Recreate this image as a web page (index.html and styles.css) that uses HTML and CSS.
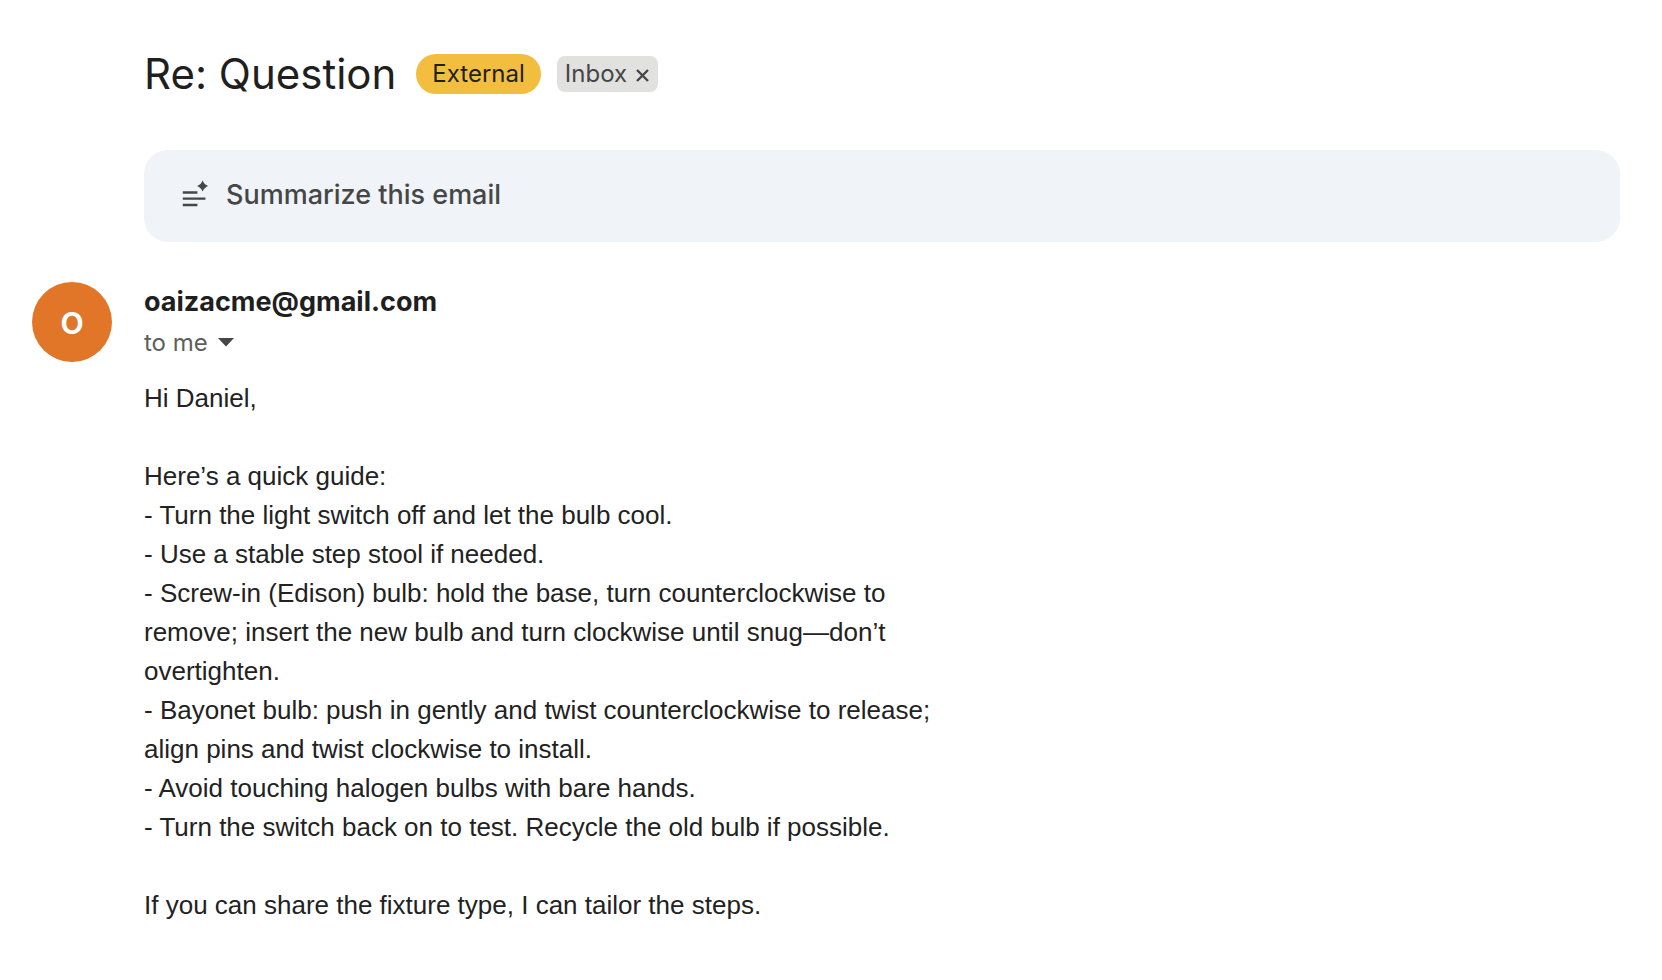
FILE: index.html
```html
<!DOCTYPE html>
<html lang="en">
<head>
<meta charset="utf-8">
<title>Re: Question</title>
<link rel="stylesheet" href="styles.css">
</head>
<body>
<main class="thread">
  <header class="subject">
    <h1 class="subject-title">Re: Question</h1>
    <span class="tag-external">External</span>
    <span class="tag-inbox">Inbox
      <button class="tag-remove" type="button" aria-label="Remove Inbox label">
        <svg width="13" height="13" viewBox="0 0 13 13" aria-hidden="true"><path d="M1 1l11 11M12 1L1 12" stroke="currentColor" stroke-width="2.4" fill="none"/></svg>
      </button>
    </span>
  </header>

  <button class="summarize" type="button">
    <svg class="summarize-icon" width="28" height="28" viewBox="0 0 28 28" aria-hidden="true">
      <path d="M.8 11.5h14.6M.8 17.7h22.6M.8 24h14.6" stroke="currentColor" stroke-width="2.3" fill="none"/>
      <path d="M20.6-.5q1.5 4 5.5 5.5q-4 1.5-5.5 5.5q-1.5-4-5.5-5.5q4-1.5 5.5-5.5z" fill="currentColor"/>
    </svg>
    <span>Summarize this email</span>
  </button>

  <article class="message">
    <div class="avatar" aria-hidden="true">o</div>
    <div class="message-main">
      <h2 class="sender">oaizacme@gmail.com</h2>
      <button class="recipients" type="button">to me
        <svg width="16" height="9" viewBox="0 0 16 9" aria-hidden="true"><path d="M0 0h16L8 8.5z" fill="#444746"/></svg>
      </button>
      <div class="message-body">
        <p>Hi Daniel,</p>
        <p>Here’s a quick guide:<br>
        - Turn the light switch off and let the bulb cool.<br>
        - Use a stable step stool if needed.<br>
        - Screw-in (Edison) bulb: hold the base, turn counterclockwise to<br>
        remove; insert the new bulb and turn clockwise until snug—don’t<br>
        overtighten.<br>
        - Bayonet bulb: push in gently and twist counterclockwise to release;<br>
        align pins and twist clockwise to install.<br>
        - Avoid touching halogen bulbs with bare hands.<br>
        - Turn the switch back on to test. Recycle the old bulb if possible.</p>
        <p>If you can share the fixture type, I can tailor the steps.</p>
      </div>
    </div>
  </article>
</main>
</body>
</html>
```
FILE: styles.css
```css
* { box-sizing: border-box; }

body {
  margin: 0;
  background: #fff;
  color: #1f1f1f;
  font-family: "Google Sans", Inter, Roboto, sans-serif;
}

button {
  border: 0;
  padding: 0;
  background: none;
  font: inherit;
  color: inherit;
  cursor: pointer;
}

svg {
  display: block;
  flex: none;
  overflow: visible;
}

.thread { padding: 46px 42px 48px 32px; }

.subject {
  display: flex;
  align-items: center;
  margin-left: 112px;
}

.subject-title {
  margin: 0 20px 0 0;
  font-size: 42px;
  font-weight: 400;
  line-height: 56px;
}

.tag-external {
  margin-right: 16px;
  padding: 0 16px;
  border-radius: 20px;
  background: #f3be3f;
  font-size: 24px;
  line-height: 40px;
}

.tag-inbox {
  display: flex;
  align-items: center;
  gap: 9px;
  padding: 0 9px 0 8px;
  border-radius: 8px;
  background: #e1e1df;
  color: #444746;
  font-size: 24px;
  line-height: 36px;
}

.tag-remove { padding-top: 3px; }

.summarize {
  display: flex;
  align-items: center;
  gap: 16px;
  width: calc(100% - 112px);
  margin: 48px 0 40px 112px;
  padding: 26px 38px 28px;
  border-radius: 24px;
  background: #f0f3f8;
  color: #444746;
  font-size: 27px;
  font-weight: 500;
  line-height: 38px;
}

.message {
  display: flex;
  gap: 32px;
}

.avatar {
  flex: none;
  width: 80px;
  height: 80px;
  border-radius: 50%;
  background: #e17629;
  color: #fff;
  font-size: 40px;
  font-weight: 500;
  line-height: 76px;
  text-align: center;
}

.message-main { min-width: 0; }

.sender {
  margin: 0;
  font-size: 27px;
  font-weight: 700;
  line-height: 40px;
}

.recipients {
  display: flex;
  align-items: center;
  gap: 10px;
  color: #5e5e5e;
  font-size: 24px;
  line-height: 41px;
}

.message-body {
  margin-top: 16px;
  color: #222;
  font-family: "Liberation Sans", Arial, sans-serif;
  font-size: 26px;
  line-height: 39px;
}

.message-body p { margin: 0 0 39px; }
```
